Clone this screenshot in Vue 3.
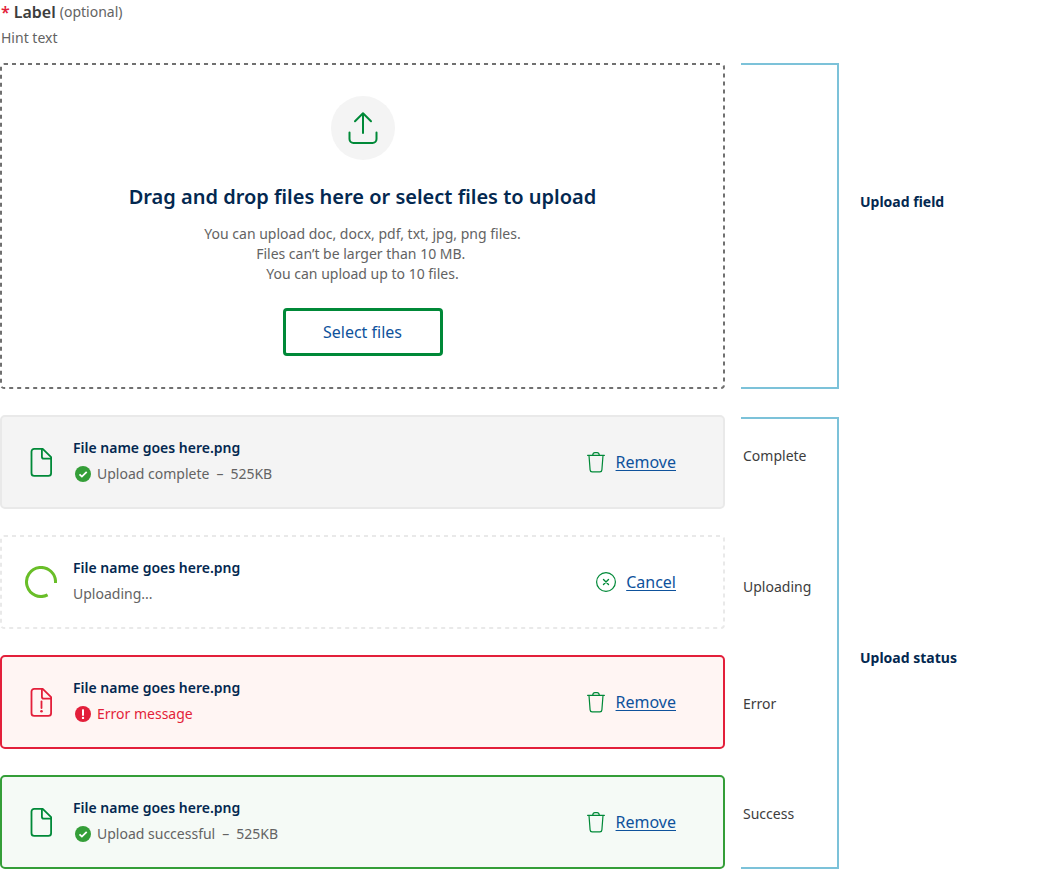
<script setup>
import { ref } from 'vue'

const picker = ref(null)

const files = [
  { id: 1, state: 'complete', name: 'File name goes here.png', status: 'Upload complete', size: '525KB', badge: 'tick', action: 'Remove' },
  { id: 2, state: 'uploading', name: 'File name goes here.png', status: 'Uploading...', action: 'Cancel' },
  { id: 3, state: 'error', name: 'File name goes here.png', status: 'Error message', badge: 'alert', action: 'Remove' },
  { id: 4, state: 'success', name: 'File name goes here.png', status: 'Upload successful', size: '525KB', badge: 'tick', action: 'Remove' }
]

const states = ['Complete', 'Uploading', 'Error', 'Success']
</script>

<template>
  <main class="page">
    <header class="field-head">
      <label class="field-label" for="file-picker">
        <span class="required">*</span>
        <span class="label-text">Label</span>
        <span class="optional">(optional)</span>
      </label>
      <p class="hint">Hint text</p>
    </header>

    <div class="board">
      <section class="dropzone">
        <svg class="dashes" aria-hidden="true"><rect x="1" y="1" rx="3" /></svg>
        <span class="upload-disc">
          <svg width="32" height="34" viewBox="0 0 32 34" fill="none" stroke="#008938" stroke-width="2" stroke-linecap="round" stroke-linejoin="round" aria-hidden="true">
            <path d="M16 22V2.500M8 10.300l8-8 8 8M2.500 21.500v6.500a4 4 0 0 0 4 4h19a4 4 0 0 0 4-4v-6.500" />
          </svg>
        </span>
        <h2 class="title">Drag and drop files here or select files to upload</h2>
        <p class="rules">
          You can upload doc, docx, pdf, txt, jpg, png files.<br />
          Files can’t be larger than 10 MB.&nbsp;<br />
          You can upload up to 10 files.
        </p>
        <input id="file-picker" ref="picker" class="picker" type="file" multiple tabindex="-1" />
        <button class="select" type="button" @click="picker.click()">Select files</button>
      </section>
      <div class="bracket"></div>
      <p class="caption caption-field">Upload field</p>

      <ul class="files">
        <li v-for="file in files" :key="file.id" class="card" :class="file.state">
          <svg v-if="file.state === 'uploading'" class="dashes" aria-hidden="true"><rect x="1" y="1" rx="3" /></svg>

          <svg v-if="file.state === 'uploading'" class="icon" viewBox="0 0 32 32" fill="none" aria-hidden="true">
            <path d="M30.500 17A14.500 14.500 0 1 0 22.600 28.900" stroke="#69be28" stroke-width="3" />
          </svg>
          <svg v-else class="icon" viewBox="0 0 32 32" fill="none" stroke="currentColor" stroke-width="1.800" stroke-linejoin="round" stroke-linecap="round" aria-hidden="true">
            <path d="M9.200 2.900h8.500l8.400 8.200v16.100a2.700 2.700 0 0 1-2.700 2.700H9.200a2.700 2.700 0 0 1-2.700-2.700V5.600a2.700 2.700 0 0 1 2.700-2.700z" />
            <path d="M16.900 3v7.700a2 2 0 0 0 2 2H26" />
            <template v-if="file.state === 'error'">
              <path d="M16.500 15.500v6.500" />
              <circle cx="16.500" cy="25.300" r="1.300" fill="currentColor" stroke="none" />
            </template>
          </svg>

          <div class="details">
            <h3 class="name">{{ file.name }}</h3>
            <p class="status">
              <svg v-if="file.badge" class="badge" viewBox="0 0 16 16" fill="none" aria-hidden="true">
                <circle cx="8" cy="8" r="8" fill="currentColor" />
                <path v-if="file.badge === 'tick'" d="M4.500 8.300l2.400 2.300 4.800-4.800" stroke="#fff" stroke-width="1.800" />
                <g v-else fill="#fff">
                  <rect x="7" y="3.300" width="2" height="6.400" rx="0.500" />
                  <circle cx="8" cy="11.900" r="1.200" />
                </g>
              </svg>
              <span>{{ file.status }}</span>
              <template v-if="file.size">
                <span class="dash">–</span>
                <span>{{ file.size }}</span>
              </template>
            </p>
          </div>

          <button class="action" type="button">
            <svg class="action-icon" viewBox="0 0 20 22" fill="none" stroke="#008938" stroke-width="1.200" stroke-linecap="round" stroke-linejoin="round" aria-hidden="true">
              <template v-if="file.action === 'Remove'">
                <path d="M1.600 4.300h16.800" />
                <path d="M6.700 4.100c.2-1.700.9-2.500 2.200-2.500h2.200c1.300 0 2 .8 2.200 2.500" />
                <path d="M3 4.500l1.100 14.400c.1 1.300.8 2 2 2h7.800c1.200 0 1.900-.7 2-2L17 4.500" />
              </template>
              <template v-else>
                <circle cx="10" cy="11" r="9.400" />
                <path d="M7.500 8.500l5 5M12.500 8.500l-5 5" stroke-width="1.400" />
              </template>
            </svg>
            <span class="action-text">{{ file.action }}</span>
          </button>
        </li>
      </ul>
      <ul class="bracket states">
        <li v-for="state in states" :key="state">{{ state }}</li>
      </ul>
      <p class="caption caption-status">Upload status</p>
    </div>
  </main>
</template>

<style>
body {
  margin: 0;
  background: #fff;
}
</style>

<style scoped>
.page {
  font-family: "Noto Sans", "Open Sans", sans-serif;
  font-size: 14px;
  line-height: 20px;
  color: #636363;
}

h2, h3, p, ul {
  margin: 0;
  padding: 0;
  list-style: none;
}

.field-head {
  display: flex;
  flex-direction: column;
  align-items: flex-start;
  gap: 4px;
  padding: 0 1px 15px;
}

.field-label {
  display: flex;
  align-items: center;
  gap: 4px;
  line-height: 24px;
}

.required {
  font-size: 16px;
  font-weight: 600;
  color: #e31f3a;
}

.label-text {
  font-size: 16px;
  font-weight: 600;
  color: #3d3d3d;
}

.board {
  display: grid;
  grid-template-columns: minmax(0, 1fr) 98px 210px;
  row-gap: 26px;
}

.dropzone {
  position: relative;
  display: flex;
  flex-direction: column;
  align-items: center;
  margin-right: 16px;
  padding: 33px 24px;
  text-align: center;
}

.dashes {
  position: absolute;
  inset: 0;
  width: 100%;
  height: 100%;
  pointer-events: none;
}

.dashes rect {
  width: calc(100% - 2px);
  height: calc(100% - 2px);
  fill: none;
  stroke: #707070;
  stroke-width: 2px;
  stroke-dasharray: 4 4;
}

.upload-disc {
  display: flex;
  align-items: center;
  justify-content: center;
  width: 64px;
  height: 64px;
  border-radius: 50%;
  background: #f4f4f4;
}

.title {
  margin: 23px 0 13px;
  font-size: 20px;
  line-height: 28px;
  font-weight: 600;
  color: #032850;
}

.picker {
  position: absolute;
  width: 1px;
  height: 1px;
  opacity: 0;
  pointer-events: none;
}

.select {
  margin-top: 24px;
  min-width: 160px;
  height: 48px;
  border: 3px solid #008938;
  border-radius: 4px;
  background: #fff;
  font: inherit;
  font-size: 16px;
  color: #0e529c;
  cursor: pointer;
}

.bracket {
  box-sizing: border-box;
  border: 2px solid #7cc2d9;
  border-left: 0;
}

.caption {
  padding-left: 21px;
  font-weight: 700;
  color: #032850;
}

.caption-field {
  padding-top: 129px;
}

.caption-status {
  padding-top: 233px;
}

.files {
  display: flex;
  flex-direction: column;
  gap: 26px;
  margin-right: 16px;
}

.card {
  position: relative;
  display: flex;
  align-items: center;
  gap: 16px;
  padding: 21px 47px 21px 23px;
  border: 2px solid #e9e9e9;
  border-radius: 5px;
  background: #f4f4f4;
  color: #008938;
}

.card.uploading {
  border-color: transparent;
  background: #fff;
}

.uploading .dashes {
  inset: -2px;
  width: calc(100% + 4px);
  height: calc(100% + 4px);
}

.uploading .dashes rect {
  stroke: #e9e9e9;
}

.card.error {
  border-color: #e31f3a;
  background: #fff5f3;
  color: #e31f3a;
}

.card.success {
  border-color: #349e38;
  background: #f5faf6;
}

.icon {
  flex: none;
  width: 32px;
  height: 32px;
}

.details {
  flex: 1;
  min-width: 0;
  padding-bottom: 2px;
}

.name {
  margin-bottom: 6px;
  font-size: 14px;
  font-weight: 600;
  color: #032850;
}

.status {
  display: flex;
  align-items: center;
  color: #636363;
}

.error .status {
  color: #e31f3a;
}

.badge {
  width: 16px;
  height: 16px;
  margin: 0 6px 0 2px;
  color: #349e38;
}

.error .badge {
  color: #e31f3a;
}

.dash {
  margin: 0 7px;
}

.action {
  display: flex;
  align-items: center;
  gap: 10px;
  padding: 0;
  border: 0;
  background: none;
  font: inherit;
  font-size: 16px;
  color: #0e529c;
  cursor: pointer;
}

.action-icon {
  width: 20px;
  height: 22px;
}

.action-text {
  text-decoration: underline;
  text-decoration-thickness: 1px;
  text-underline-offset: 2px;
}

.states {
  display: grid;
  grid-template-rows: 131px 117px 110px 20px;
  align-content: start;
  margin-top: 2px;
  padding: 27px 0 0 2px;
  color: #3d3d3d;
}
</style>
